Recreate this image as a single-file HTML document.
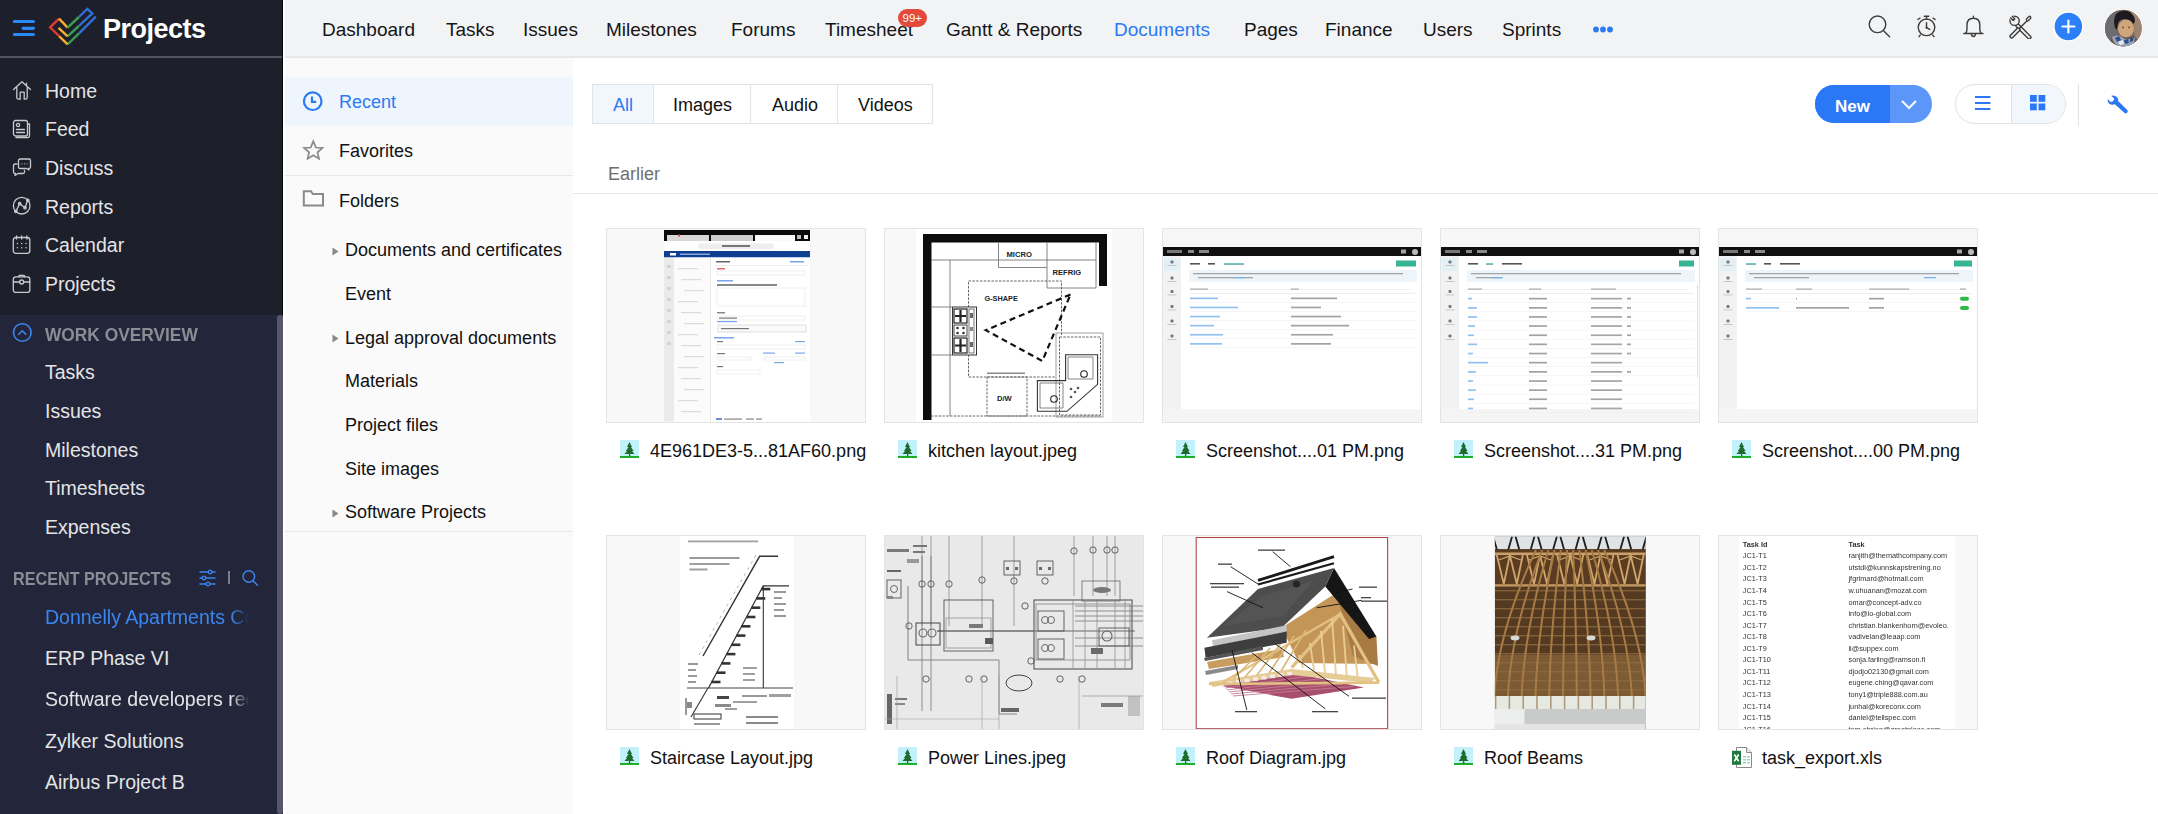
<!DOCTYPE html>
<html><head><meta charset="utf-8">
<style>
*{box-sizing:border-box;margin:0;padding:0}
html,body{width:2158px;height:814px;overflow:hidden;background:#fff;font-family:"Liberation Sans",sans-serif}
.a{position:absolute;white-space:nowrap}
#sb{position:absolute;left:0;top:0;width:283px;height:814px;background:#1d1f2b;overflow:hidden}
#sbe{position:absolute;left:282px;top:0;width:1px;height:315px;background:#06070b}
#sbl{position:absolute;left:0;top:315px;width:283px;height:499px;background:#23263a}
.clip{display:block;white-space:nowrap;width:204px;overflow:hidden;-webkit-mask-image:linear-gradient(to right,#000 186px,transparent 204px);mask-image:linear-gradient(to right,#000 186px,transparent 204px)}
.si{position:absolute;white-space:nowrap;left:45px;font-size:19.5px;color:#e4e4e6;line-height:1}
.sic{position:absolute;left:13px}
#tn{position:absolute;left:285px;top:0;width:1873px;height:58px;background:#f2f3f5;border-bottom:2px solid #e7e8ea}
.ni{position:absolute;top:20px;font-size:19px;color:#151515;line-height:1}
#fp{position:absolute;left:285px;top:58px;width:288px;height:756px;background:#fafafa}
#wst{position:absolute;left:283px;top:0;width:2px;height:814px;background:#fff}
.fi{position:absolute;font-size:18px;color:#111;line-height:1}
#mn{position:absolute;left:573px;top:58px;width:1585px;height:756px;background:#fff}
.card{position:absolute;width:260px;height:195px;border:1px solid #e4e4e4;background:#f8f8f8;overflow:hidden}
.cap{position:absolute;font-size:18px;color:#111;line-height:1}
</style></head><body>
<div id="sb">
  <div id="sbl"></div>
  <div class="a" style="left:0;top:56px;width:283px;height:2px;background:#4f5260"></div>
  <!-- hamburger -->
  <div class="a" style="left:13px;top:20px;width:21px;height:3px;border-radius:2px;background:#2f86f6"></div>
  <div class="a" style="left:22px;top:27px;width:12px;height:3px;border-radius:2px;background:#2f86f6"></div>
  <div class="a" style="left:13px;top:33px;width:21px;height:3px;border-radius:2px;background:#2f86f6"></div>
  <!-- logo -->
  <svg class="a" style="left:48px;top:6px" width="50" height="42" viewBox="0 0 50 42"></svg>
  <div class="a" style="left:103px;top:15.5px;font-size:27px;font-weight:700;color:#fff;line-height:1;letter-spacing:-0.5px">Projects</div>

  <div class="si" style="top:82px">Home</div>
  <div class="si" style="top:120px">Feed</div>
  <div class="si" style="top:159px">Discuss</div>
  <div class="si" style="top:198px">Reports</div>
  <div class="si" style="top:236px">Calendar</div>
  <div class="si" style="top:275px">Projects</div>

  <div class="a" style="left:44.5px;top:326.5px;font-size:17.5px;font-weight:700;color:#8b8d95;line-height:1;transform:scaleX(0.99);transform-origin:0 0">WORK OVERVIEW</div>
  <div class="si" style="top:363px">Tasks</div>
  <div class="si" style="top:402px">Issues</div>
  <div class="si" style="top:441px">Milestones</div>
  <div class="si" style="top:479px">Timesheets</div>
  <div class="si" style="top:518px">Expenses</div>

  <div class="a" style="left:13px;top:570.5px;font-size:17.5px;font-weight:700;color:#8b8d95;line-height:1;transform:scaleX(0.925);transform-origin:0 0">RECENT PROJECTS</div>
  <div class="si" style="top:608px;color:#3a86f0"><span class="clip">Donnelly Apartments Construction</span></div>
  <div class="si" style="top:649px">ERP Phase VI</div>
  <div class="si" style="top:690px"><span class="clip">Software developers recruitment</span></div>
  <div class="si" style="top:732px">Zylker Solutions</div>
  <div class="si" style="top:773px">Airbus Project B</div>
  <div class="si" style="top:814px">Bosch connected</div>
  <div class="a" style="left:277px;top:315px;width:6px;height:499px;border-radius:3px;background:#54566a"></div>
</div>

<div id="tn">
  <div class="ni" style="left:37px">Dashboard</div>
  <div class="ni" style="left:161px">Tasks</div>
  <div class="ni" style="left:238px">Issues</div>
  <div class="ni" style="left:321px">Milestones</div>
  <div class="ni" style="left:446px">Forums</div>
  <div class="ni" style="left:540px">Timesheet</div>
  <div class="ni" style="left:661px">Gantt &amp; Reports</div>
  <div class="ni" style="left:829px;color:#2a7af2">Documents</div>
  <div class="ni" style="left:959px">Pages</div>
  <div class="ni" style="left:1040px">Finance</div>
  <div class="ni" style="left:1138px">Users</div>
  <div class="ni" style="left:1217px">Sprints</div>
</div>

<div id="wst"></div><div id="sbe"></div>
<div id="fp">
  <div class="a" style="left:0;top:19px;width:288px;height:49px;background:#eef5fd"></div>
  <div class="a" style="left:0;top:117px;width:288px;height:1px;background:#e6e6e6"></div>
  <div class="a" style="left:0;top:473px;width:288px;height:1px;background:#e6e6e6"></div>
</div>
<div class="fi" style="left:339px;top:92.5px;color:#2a7af2">Recent</div>
<div class="fi" style="left:339px;top:142px">Favorites</div>
<div class="fi" style="left:339px;top:192px">Folders</div>
<div class="fi" style="left:345px;top:241px">Documents and certificates</div>
<div class="fi" style="left:345px;top:284.5px">Event</div>
<div class="fi" style="left:345px;top:328.5px">Legal approval documents</div>
<div class="fi" style="left:345px;top:372px">Materials</div>
<div class="fi" style="left:345px;top:416px">Project files</div>
<div class="fi" style="left:345px;top:460px">Site images</div>
<div class="fi" style="left:345px;top:503px">Software Projects</div>
<svg class="a" style="left:332px;top:247px" width="7" height="9"><path d="M0.5 0.5L6.5 4.5L0.5 8.5Z" fill="#888"/></svg>
<svg class="a" style="left:332px;top:334px" width="7" height="9"><path d="M0.5 0.5L6.5 4.5L0.5 8.5Z" fill="#888"/></svg>
<svg class="a" style="left:332px;top:509px" width="7" height="9"><path d="M0.5 0.5L6.5 4.5L0.5 8.5Z" fill="#888"/></svg>


<div id="mn">
  <div class="a" style="left:0;top:135px;width:1585px;height:1px;background:#e6e6e6"></div>
</div>
<!-- tabs -->
<div class="a" style="left:592px;top:84px;width:341px;height:40px;border:1px solid #e3e3e3;background:#fff"></div>
<div class="a" style="left:593px;top:85px;width:60px;height:38px;background:#f2f7fd"></div>
<div class="a" style="left:653px;top:85px;width:1px;height:38px;background:#e3e3e3"></div>
<div class="a" style="left:750px;top:85px;width:1px;height:38px;background:#e3e3e3"></div>
<div class="a" style="left:837px;top:85px;width:1px;height:38px;background:#e3e3e3"></div>
<div class="fi" style="left:613px;top:95.5px;color:#2a7af2">All</div>
<div class="fi" style="left:673px;top:95.5px">Images</div>
<div class="fi" style="left:772px;top:95.5px">Audio</div>
<div class="fi" style="left:858px;top:95.5px">Videos</div>
<div class="fi" style="left:608px;top:164.5px;color:#6e6e6e">Earlier</div>
<!-- new button -->
<div class="a" style="left:1815px;top:85px;width:117px;height:38px;border-radius:19px;background:#5b96f8;overflow:hidden"><div class="a" style="left:0;top:0;width:75px;height:38px;background:#2b78f7"></div></div>
<div class="a" style="left:1835px;top:97.5px;font-size:17px;color:#fff;line-height:1;font-weight:700">New</div>
<svg class="a" style="left:1900px;top:99px" width="18" height="12"><path d="M2 2L9 9L16 2" fill="none" stroke="#fff" stroke-width="2"/></svg>
<!-- view toggle -->
<div class="a" style="left:1955px;top:84px;width:111px;height:40px;border-radius:20px;border:1px solid #e2e2e2;background:#fff;overflow:hidden"><div class="a" style="left:55px;top:0;width:56px;height:40px;background:#f2f7fd;border-left:1px solid #e2e2e2"></div></div>
<div class="a" style="left:2078px;top:84px;width:1px;height:42px;background:#e2e2e2"></div>

<svg class="a" style="left:45px;top:4px" width="56" height="46" viewBox="0 0 56 46"><path d="M50.8 12.7 L34.0 29.4" fill="none" stroke="#2f6fd6" stroke-width="2.4" stroke-linejoin="miter" stroke-linecap="butt"/><path d="M34.0 29.4 L22.6 40.4" fill="none" stroke="#3b9b52" stroke-width="2.4" stroke-linejoin="miter" stroke-linecap="butt"/><path d="M22.6 40.4 L14.1 32.2" fill="none" stroke="#f4b131" stroke-width="2.4" stroke-linejoin="miter" stroke-linecap="butt"/><path d="M14.1 32.2 L5.1 23.3 L14.1 14.7" fill="none" stroke="#e2392f" stroke-width="2.4" stroke-linejoin="miter" stroke-linecap="butt"/><path d="M14.1 14.7 L22.6 23.6" fill="none" stroke="#f4b131" stroke-width="2.4" stroke-linejoin="miter" stroke-linecap="butt"/><path d="M22.6 23.6 L33.9 13.0" fill="none" stroke="#3b9b52" stroke-width="2.4" stroke-linejoin="miter" stroke-linecap="butt"/><path d="M33.9 13.0 L42.4 4.8 L47.3 9.4 L33.9 22.0" fill="none" stroke="#2f6fd6" stroke-width="2.4" stroke-linejoin="miter" stroke-linecap="butt"/><path d="M33.9 22.0 L22.6 32.4" fill="none" stroke="#3b9b52" stroke-width="2.4" stroke-linejoin="miter" stroke-linecap="butt"/><path d="M22.6 32.4 L13.6 23.8" fill="none" stroke="#f4b131" stroke-width="2.4" stroke-linejoin="miter" stroke-linecap="butt"/></svg>
<svg class="a" style="left:12px;top:80px" width="20" height="21" viewBox="0 0 20 21"><path d="M1.5 9.5L10 1.8L18.5 9.5M4.8 7V17.5Q4.8 19.2 6.5 19.2H8.2V12.2H12.2V19.2H13.5Q15.2 19.2 15.2 17.5V7M14.5 3.2V5.5" fill="none" stroke="#c9cace" stroke-width="1.3" stroke-linecap="round" stroke-linejoin="round"/></svg>
<svg class="a" style="left:12px;top:119px" width="20" height="20" viewBox="0 0 20 20"><rect x="1.5" y="1.5" width="14" height="15.5" rx="2" fill="none" stroke="#c9cace" stroke-width="1.3" stroke-linecap="round" stroke-linejoin="round"/><path d="M15.5 5H17.5V17Q17.5 18.5 16 18.5H4" fill="none" stroke="#c9cace" stroke-width="1.3" stroke-linecap="round" stroke-linejoin="round"/><circle cx="6" cy="6" r="1.6" fill="none" stroke="#c9cace" stroke-width="1.3" stroke-linecap="round" stroke-linejoin="round"/><path d="M4.5 10.5H12.5M4.5 13.5H12.5" fill="none" stroke="#c9cace" stroke-width="1.3" stroke-linecap="round" stroke-linejoin="round"/></svg>
<svg class="a" style="left:12px;top:157px" width="20" height="20" viewBox="0 0 20 20"><path d="M6.5 3.5Q6.5 2 8 2H17Q18.5 2 18.5 3.5V10Q18.5 11.5 17 11.5H16.5L17 13L14.5 11.5H8Q6.5 11.5 6.5 10Z" fill="none" stroke="#c9cace" stroke-width="1.3" stroke-linecap="round" stroke-linejoin="round"/><path d="M5 7H3Q1.5 7 1.5 8.5V15Q1.5 16.5 3 16.5H3.5L3 18.5L6 16.5H11Q12.5 16.5 12.5 15V13.5" fill="none" stroke="#c9cace" stroke-width="1.3" stroke-linecap="round" stroke-linejoin="round"/><circle cx="10" cy="6.8" r="0.6" fill="#c9cace"/><circle cx="12.5" cy="6.8" r="0.6" fill="#c9cace"/><circle cx="15" cy="6.8" r="0.6" fill="#c9cace"/></svg>
<svg class="a" style="left:12px;top:196px" width="20" height="20" viewBox="0 0 20 20"><circle cx="9.7" cy="9.7" r="8.3" fill="none" stroke="#c9cace" stroke-width="1.3" stroke-linecap="round" stroke-linejoin="round"/><path d="M3.8 15.6L7.7 7.7L13 11.7L15.6 4.5" fill="none" stroke="#c9cace" stroke-width="1.3" stroke-linecap="round" stroke-linejoin="round"/><circle cx="3.8" cy="15.3" r="1.2" fill="none" stroke="#c9cace" stroke-width="1.3" stroke-linecap="round" stroke-linejoin="round"/><circle cx="7.7" cy="7.7" r="1.2" fill="none" stroke="#c9cace" stroke-width="1.3" stroke-linecap="round" stroke-linejoin="round"/><circle cx="13" cy="11.7" r="1.2" fill="none" stroke="#c9cace" stroke-width="1.3" stroke-linecap="round" stroke-linejoin="round"/><circle cx="15.8" cy="4.3" r="1.2" fill="none" stroke="#c9cace" stroke-width="1.3" stroke-linecap="round" stroke-linejoin="round"/></svg>
<svg class="a" style="left:12px;top:235px" width="20" height="20" viewBox="0 0 20 20"><rect x="1.3" y="2.5" width="16.5" height="15.8" rx="2.5" fill="none" stroke="#c9cace" stroke-width="1.3" stroke-linecap="round" stroke-linejoin="round"/><path d="M4.5 1V4M9.7 1V4M14.9 1V4" fill="none" stroke="#c9cace" stroke-width="1.3" stroke-linecap="round" stroke-linejoin="round"/><circle cx="5.4" cy="8.5" r="0.75" fill="#c9cace"/><circle cx="5.4" cy="12.8" r="0.75" fill="#c9cace"/><circle cx="9.7" cy="8.5" r="0.75" fill="#c9cace"/><circle cx="9.7" cy="12.8" r="0.75" fill="#c9cace"/><circle cx="14.0" cy="8.5" r="0.75" fill="#c9cace"/><circle cx="14.0" cy="12.8" r="0.75" fill="#c9cace"/></svg>
<svg class="a" style="left:12px;top:274px" width="20" height="20" viewBox="0 0 20 20"><rect x="1.3" y="2.8" width="16.5" height="15.6" rx="2.5" fill="none" stroke="#c9cace" stroke-width="1.3" stroke-linecap="round" stroke-linejoin="round"/><path d="M7 2.8V1.3H12.3V2.8M1.3 8H7.6M11.8 8H17.8" fill="none" stroke="#c9cace" stroke-width="1.3" stroke-linecap="round" stroke-linejoin="round"/><circle cx="9.7" cy="8" r="2" fill="none" stroke="#c9cace" stroke-width="1.3" stroke-linecap="round" stroke-linejoin="round"/></svg>
<svg class="a" style="left:12px;top:322px" width="21" height="21" viewBox="0 0 21 21"><circle cx="10.3" cy="10.5" r="8.8" fill="none" stroke="#3b86ee" stroke-width="1.6"/><path d="M6.8 12.3L10.3 8.8L13.8 12.3" fill="none" stroke="#3b86ee" stroke-width="1.6" stroke-linecap="round" stroke-linejoin="round"/></svg>
<svg class="a" style="left:198px;top:569px" width="19" height="18" viewBox="0 0 19 18"><path d="M2 3H17M2 9H17M2 15H17" fill="none" stroke="#3b86ee" stroke-width="1.4" stroke-linecap="round"/><circle cx="12" cy="3" r="1.8" fill="#23263a" stroke="#3b86ee" stroke-width="1.3"/><circle cx="6" cy="9" r="1.8" fill="#23263a" stroke="#3b86ee" stroke-width="1.3"/><circle cx="10" cy="15" r="1.8" fill="#23263a" stroke="#3b86ee" stroke-width="1.3"/></svg>
<div class="a" style="left:228px;top:571px;width:1.5px;height:13px;background:#7b7d88"></div>
<svg class="a" style="left:241px;top:569px" width="19" height="18" viewBox="0 0 19 18"><circle cx="7.8" cy="7.5" r="5.8" fill="none" stroke="#3b86ee" stroke-width="1.4" stroke-linecap="round"/><path d="M12 11.8L16.5 16.3" fill="none" stroke="#3b86ee" stroke-width="1.4" stroke-linecap="round"/></svg>
<svg class="a" style="left:1866px;top:14px" width="26" height="25" viewBox="0 0 26 25"><circle cx="11.5" cy="10.3" r="8.3" fill="none" stroke="#3d3d3d" stroke-width="1.4" stroke-linecap="round" stroke-linejoin="round"/><path d="M17.8 16.9L23.6 22.8" fill="none" stroke="#3d3d3d" stroke-width="1.4" stroke-linecap="round" stroke-linejoin="round"/></svg>
<svg class="a" style="left:1914px;top:14px" width="26" height="25" viewBox="0 0 26 25"><circle cx="12.5" cy="13.3" r="8.3" fill="none" stroke="#3d3d3d" stroke-width="1.4" stroke-linecap="round" stroke-linejoin="round"/><path d="M10.2 2.3H14.8M12.5 2.3V4.6M3.8 5.5L6 4.2M21.2 5.5L19 4.2M5 22.6L6.3 21M20 22.6L18.7 21M12.5 8.6V13.6L15.8 15.4" fill="none" stroke="#3d3d3d" stroke-width="1.4" stroke-linecap="round" stroke-linejoin="round"/><circle cx="12.5" cy="13.6" r="1.1" fill="#3d3d3d"/></svg>
<svg class="a" style="left:1961px;top:14px" width="26" height="25" viewBox="0 0 26 25"><path d="M4.5 19.5Q6 18 6 15V11Q6 4.3 12.4 4.3Q18.8 4.3 18.8 11V15Q18.8 18 20.3 19.5H2.8H22M12.4 2.3V4.3M10.4 19.8Q10.4 22.5 12.4 22.5Q14.4 22.5 14.4 19.8" fill="none" stroke="#3d3d3d" stroke-width="1.4" stroke-linecap="round" stroke-linejoin="round"/></svg>
<svg class="a" style="left:2008px;top:14px" width="26" height="25" viewBox="0 0 26 25"><path d="M9.5 11.5L21.3 23.3" stroke="#3d3d3d" stroke-width="4.6" stroke-linecap="round"/><path d="M9.5 11.5L21.3 23.3" stroke="#f2f3f5" stroke-width="1.8" stroke-linecap="round"/><circle cx="6.6" cy="6.8" r="4.6" fill="#f2f3f5" stroke="#3d3d3d" stroke-width="1.4"/><path d="M1.2 4.2L4.5 1.2L8 4.8L5 8Z" fill="#f2f3f5"/><path d="M2.3 3.6L5.2 6.5L6.8 4.9L4 2" fill="none" stroke="#3d3d3d" stroke-width="1.4" stroke-linejoin="round"/><path d="M3.6 22.3L10.3 15.6" stroke="#3d3d3d" stroke-width="4.6" stroke-linecap="round"/><path d="M3.6 22.3L10.3 15.6" stroke="#f2f3f5" stroke-width="1.8" stroke-linecap="round"/><path d="M10.8 15.1L19.6 6.3" stroke="#3d3d3d" stroke-width="1.4"/><path d="M19.6 5.6L21.6 3.6" stroke="#3d3d3d" stroke-width="3.8" stroke-linecap="round"/><path d="M19.6 5.6L21.6 3.6" stroke="#f2f3f5" stroke-width="1.2" stroke-linecap="round"/></svg>
<svg class="a" style="left:2052px;top:10px" width="33" height="33" viewBox="0 0 33 33"><circle cx="16.4" cy="16.5" r="14.5" fill="#2c7ff8" stroke="#fff" stroke-width="1.5"/><path d="M16.4 10.5V22.5M10.4 16.5H22.4" stroke="#fff" stroke-width="2.2" stroke-linecap="round"/></svg>
<svg class="a" style="left:2103px;top:9px" width="40" height="40" viewBox="0 0 40 40"><defs><clipPath id="av"><circle cx="20.3" cy="19.1" r="18.4"/></clipPath></defs><circle cx="20.3" cy="19.1" r="19.4" fill="#fff"/><g clip-path="url(#av)"><rect width="40" height="40" fill="#7a6a60"/><rect x="0" y="0" width="15" height="40" fill="#6c6c6e"/><path d="M24 0H40V30L33 32Q30 20 31 8Z" fill="#9c8470"/><path d="M11 13Q11 2 21 1.5Q31 2 32 12Q31 16 29 14Q27 9 22 10Q16 10 15 15Q14 20 13.5 21Q11 18 11 13Z" fill="#1d1a1f"/><ellipse cx="23" cy="19.5" rx="8" ry="9" fill="#cfa57a"/><path d="M15 12Q20 8 29 12Q27 9 22 9Q17 9 15 12Z" fill="#1d1a1f"/><circle cx="20" cy="18.5" r="0.9" fill="#7a4a50"/><circle cx="26" cy="18.5" r="0.9" fill="#7a4a50"/><path d="M6 40Q7 27 14 25Q22 31 31 27Q36 30 37 40Z" fill="#6a5548"/><path d="M9 28Q15 24 20 29Q26 32 32 28L31 35Q24 40 15 37Q10 34 9 28Z" fill="#9aa4b4"/><path d="M12 29L16 27L18 31L14 33ZM21 31L25 30L26 34L22 35ZM27 29L31 28L30 32L27 33Z" fill="#2d4f8e"/><path d="M15 33L20 31L21 35L17 36Z" fill="#e8eaee"/></g></svg>
<div class="a" style="left:898px;top:9px;width:28.5px;height:18px;border-radius:9px;background:#e34a3b;color:#fff;font-size:11.5px;line-height:18px;text-align:center">99+</div>
<svg class="a" style="left:1591px;top:24px" width="24" height="10" viewBox="0 0 24 10"><circle cx="5.0" cy="5.5" r="2.9" fill="#2a7af2"/><circle cx="12.0" cy="5.5" r="2.9" fill="#2a7af2"/><circle cx="19.0" cy="5.5" r="2.9" fill="#2a7af2"/></svg>
<svg class="a" style="left:12px;top:19px" width="24" height="18" viewBox="0 0 24 18"><path d="M2.2 2.6H21.8M10.8 9.1H21.8M2.2 15.5H21.8" stroke="#2b8af7" stroke-width="2.6" stroke-linecap="round"/></svg>
<svg class="a" style="left:301px;top:90px" width="24" height="24" viewBox="0 0 24 24"><circle cx="11.7" cy="11.2" r="8.8" fill="none" stroke="#2a7af2" stroke-width="2.2"/><path d="M11 6.5V11.8H15.2" fill="none" stroke="#2a7af2" stroke-width="2.2"/></svg>
<svg class="a" style="left:301px;top:139px" width="24" height="23" viewBox="0 0 24 23"><path d="M12.3 2.3L14.9 8.5L21.5 9L16.5 13.3L18 19.8L12.3 16.3L6.6 19.8L8.1 13.3L3.1 9L9.7 8.5Z" fill="none" stroke="#8a8a8a" stroke-width="1.7" stroke-linejoin="miter"/></svg>
<svg class="a" style="left:301px;top:189px" width="24" height="20" viewBox="0 0 24 20"><path d="M2.8 2.3H10L11.8 5H22V16.5H2.8Z" fill="none" stroke="#8a8a8a" stroke-width="2"/></svg>
<svg class="a" style="left:1973px;top:94px" width="20" height="18" viewBox="0 0 20 18"><path d="M2 3H17.4M2 9H17.4M2 15H17.4" stroke="#2a78f5" stroke-width="1.9"/></svg>
<svg class="a" style="left:2029px;top:94px" width="18" height="18" viewBox="0 0 18 18"><rect x="1.0" y="1.0" width="6.8" height="6.8" fill="#2a78f5"/><rect x="1.0" y="9.5" width="6.8" height="6.8" fill="#2a78f5"/><rect x="9.5" y="1.0" width="6.8" height="6.8" fill="#2a78f5"/><rect x="9.5" y="9.5" width="6.8" height="6.8" fill="#2a78f5"/></svg>
<svg class="a" style="left:2106px;top:93px" width="23" height="22" viewBox="0 0 23 22"><path d="M9.5 3.8Q7 1.2 3.8 2.3L6.8 5.3L5.6 7.8L3 8.4L0.3 5.5Q-0.2 9.6 3.4 11Q5.5 11.6 7.4 10.8L16.8 19.2Q18.6 20.6 19.9 19.1Q21 17.6 19.5 16.3L10.6 7.6Q11.2 5.5 9.5 3.8Z" fill="#2a78f5" transform="translate(1.5 0.5)"/></svg>

<div class="card" style="left:606px;top:228px"><svg class="a" style="left:0;top:0;filter:blur(0.60px)" width="258" height="193" viewBox="0 0 258 193"><rect x="57.0" y="1.0" width="146.0" height="192.0" fill="#fff" /><rect x="57.0" y="1.0" width="146.0" height="11.0" fill="#0a0a0a" /><rect x="60.0" y="6.0" width="42.0" height="6.0" fill="#d8d8d8" /><rect x="104.0" y="6.0" width="42.0" height="6.0" fill="#cfcfcf" /><rect x="148.0" y="6.0" width="40.0" height="6.0" fill="#fafafa" /><rect x="190.0" y="6.0" width="4.0" height="4.0" fill="#bbb" /><rect x="197.0" y="6.0" width="4.0" height="4.0" fill="#eee" /><rect x="71.0" y="5.5" width="2.0" height="2.0" fill="#e44" /><rect x="57.0" y="12.0" width="146.0" height="10.0" fill="#fff" /><rect x="91.0" y="14.5" width="76.0" height="5.5" fill="#eeeeee" rx="2.7"/><rect x="115.0" y="16.0" width="28.0" height="2.0" fill="#777" /><rect x="57.0" y="22.0" width="146.0" height="6.5" fill="#0e3f92" /><rect x="63.0" y="24.0" width="6.0" height="2.5" fill="#fff" /><rect x="73.0" y="24.5" width="30.0" height="1.5" fill="#8aa8dd" /><rect x="57.0" y="28.5" width="10.0" height="164.0" fill="#ebebeb" /><rect x="67.0" y="28.5" width="36.0" height="164.0" fill="#fbfbfb" /><rect x="103.0" y="28.5" width="100.0" height="164.0" fill="#fff" /><rect x="103.0" y="28.5" width="1.0" height="164.0" fill="#e6e6e6" /><rect x="109.0" y="32.0" width="14.0" height="1.5" fill="#666" /><rect x="183.0" y="32.0" width="14.0" height="1.5" fill="#7aa6e6" /><rect x="107.0" y="36.0" width="94.0" height="1.0" fill="#eee" /><rect x="110.0" y="39.0" width="8.0" height="1.5" fill="#e66" /><rect x="110.0" y="42.0" width="88.0" height="4.0" fill="#fff" stroke="#e4e4e4" stroke-width="0.6"/><rect x="110.0" y="51.0" width="16.0" height="1.5" fill="#7aa6e6" /><rect x="110.0" y="55.0" width="60.0" height="2.0" fill="#888" /><rect x="110.0" y="59.0" width="88.0" height="18.0" fill="#fff" stroke="#e4e4e4" stroke-width="0.6"/><rect x="110.0" y="83.0" width="8.0" height="1.5" fill="#888" /><rect x="110.0" y="87.0" width="88.0" height="4.0" fill="#fff" stroke="#e4e4e4" stroke-width="0.6"/><rect x="112.0" y="88.5" width="18.0" height="1.2" fill="#777" /><rect x="110.0" y="92.0" width="20.0" height="1.2" fill="#7aa6e6" /><rect x="111.0" y="96.0" width="88.0" height="7.0" fill="#fafafa" stroke="#ccc" stroke-width="0.6"/><rect x="114.0" y="99.0" width="28.0" height="1.2" fill="#777" /><rect x="107.0" y="108.0" width="20.0" height="1.5" fill="#7aa6e6" /><rect x="110.0" y="112.0" width="6.0" height="1.2" fill="#777" /><rect x="188.0" y="112.0" width="10.0" height="1.2" fill="#7aa6e6" /><rect x="110.0" y="116.0" width="88.0" height="4.0" fill="#fff" stroke="#e4e4e4" stroke-width="0.6"/><rect x="110.0" y="124.0" width="8.0" height="1.2" fill="#777" /><rect x="156.0" y="123.5" width="12.0" height="1.2" fill="#7aa6e6" /><rect x="188.0" y="123.5" width="10.0" height="1.2" fill="#7aa6e6" /><rect x="110.0" y="128.0" width="34.0" height="3.0" fill="#fff" stroke="#e4e4e4" stroke-width="0.6"/><rect x="157.0" y="128.0" width="41.0" height="3.0" fill="#fff" stroke="#e4e4e4" stroke-width="0.6"/><rect x="167.0" y="133.0" width="10.0" height="1.2" fill="#7aa6e6" /><rect x="110.0" y="137.0" width="6.0" height="1.2" fill="#777" /><rect x="110.0" y="141.0" width="43.0" height="4.0" fill="#fff" stroke="#e4e4e4" stroke-width="0.6"/><rect x="109.0" y="189.0" width="6.0" height="2.0" fill="#6d8fd0" /><rect x="117.0" y="189.5" width="18.0" height="1.2" fill="#888" /><rect x="139.0" y="189.5" width="8.0" height="1.2" fill="#888" /><rect x="149.0" y="189.5" width="6.0" height="1.2" fill="#888" /><rect x="71.0" y="39.0" width="20.0" height="1.2" fill="#dcdcdc" /><rect x="74.0" y="50.0" width="20.0" height="1.2" fill="#dcdcdc" /><rect x="77.0" y="61.0" width="20.0" height="1.2" fill="#dcdcdc" /><rect x="71.0" y="72.0" width="20.0" height="1.2" fill="#dcdcdc" /><rect x="74.0" y="83.0" width="20.0" height="1.2" fill="#dcdcdc" /><rect x="77.0" y="94.0" width="20.0" height="1.2" fill="#dcdcdc" /><rect x="71.0" y="105.0" width="20.0" height="1.2" fill="#dcdcdc" /><rect x="74.0" y="116.0" width="20.0" height="1.2" fill="#dcdcdc" /><rect x="77.0" y="127.0" width="20.0" height="1.2" fill="#dcdcdc" /><rect x="71.0" y="138.0" width="20.0" height="1.2" fill="#dcdcdc" /><rect x="74.0" y="149.0" width="20.0" height="1.2" fill="#dcdcdc" /><rect x="77.0" y="160.0" width="20.0" height="1.2" fill="#dcdcdc" /><rect x="71.0" y="171.0" width="20.0" height="1.2" fill="#dcdcdc" /><rect x="74.0" y="182.0" width="20.0" height="1.2" fill="#dcdcdc" /><rect x="60.0" y="36.0" width="4.0" height="3.0" fill="#d4d4d4" /><rect x="60.0" y="47.0" width="4.0" height="3.0" fill="#d4d4d4" /><rect x="60.0" y="58.0" width="4.0" height="3.0" fill="#d4d4d4" /><rect x="60.0" y="69.0" width="4.0" height="3.0" fill="#d4d4d4" /><rect x="60.0" y="80.0" width="4.0" height="3.0" fill="#d4d4d4" /><rect x="60.0" y="91.0" width="4.0" height="3.0" fill="#d4d4d4" /><rect x="60.0" y="102.0" width="4.0" height="3.0" fill="#d4d4d4" /><rect x="60.0" y="113.0" width="4.0" height="3.0" fill="#d4d4d4" /></svg></div>
<svg class="a" style="left:620px;top:440px" width="19" height="18" viewBox="0 0 19 18"><rect width="19" height="18" fill="#c2f1fb"/><path d="M0 18Q9.5 13.5 19 18Z" fill="#1fae2a"/><rect x="0" y="16" width="19" height="2" fill="#1fae2a"/><path d="M9.5 2L12 7H11L13.5 11H12L14.5 14H4.5L7 11H6L8.5 7H7Z" fill="#1d6b2d"/><rect x="9" y="13" width="1.2" height="3.5" fill="#1d6b2d"/></svg>
<div class="cap" style="left:650px;top:441.5px">4E961DE3-5...81AF60.png</div>
<div class="card" style="left:884px;top:228px"><svg class="a" style="left:0;top:0" width="258" height="193" viewBox="0 0 258 193"><rect x="31.0" y="0.0" width="196.0" height="193.0" fill="#fff" /><rect x="38.0" y="5.0" width="8.5" height="186.0" fill="#0d0d0d" /><rect x="38.0" y="5.0" width="184.0" height="8.5" fill="#0d0d0d" /><rect x="214.0" y="5.0" width="8.0" height="52.0" fill="#0d0d0d" /><path d="M46 31H162M65 31V187M46 78H67M46 126H67" stroke="#777" stroke-width="0.9" fill="none"/><path d="M113.5 13.5V38.5H162M162 13.5V59H211V13.5M162 31H211" stroke="#777" stroke-width="0.9" fill="none"/><path d="M176.5 106V52H83.5V148H171" stroke="#666" stroke-width="1" fill="none" stroke-dasharray="2.5 1.3"/><rect x="174.5" y="108" width="41" height="78" stroke="#666" stroke-width="1" fill="none" stroke-dasharray="2.5 1.3"/><rect x="102" y="148" width="40" height="39" stroke="#666" stroke-width="1" fill="none" stroke-dasharray="2.5 1.3"/><path d="M46 187H217" stroke="#666" stroke-width="1" fill="none" stroke-dasharray="2.5 1.3"/><rect x="171" y="104" width="47" height="84" stroke="#888" stroke-width="0.8" fill="none"/><rect x="102.0" y="143.5" width="38.0" height="1.5" fill="#888" /><rect x="67.5" y="78.0" width="24.0" height="48.0" fill="#fff" stroke="#333" stroke-width="1"/><rect x="69.0" y="80.0" width="13.0" height="14.0" fill="#fff" stroke="#222" stroke-width="1.2"/><rect x="69.0" y="109.0" width="13.0" height="15.0" fill="#fff" stroke="#222" stroke-width="1.2"/><rect x="69.0" y="96.0" width="13.0" height="11.0" fill="#fff" stroke="#444" stroke-width="1"/><path d="M75.5 81V93M70 87H81M75.5 110V123M70 116.5H81" stroke="#222" stroke-width="2.2"/><circle cx="72.5" cy="99" r="1.3" fill="#333"/><circle cx="78.5" cy="99" r="1.3" fill="#333"/><circle cx="72.5" cy="104" r="1.3" fill="#333"/><circle cx="78.5" cy="104" r="1.3" fill="#333"/><rect x="84.0" y="80.0" width="5.0" height="44.0" fill="#fff" stroke="#555" stroke-width="0.8"/><rect x="85.0" y="84.0" width="3.0" height="5.0" fill="#666" /><rect x="85.0" y="113.0" width="3.0" height="5.0" fill="#666" /><rect x="85.0" y="98.0" width="3.0" height="4.0" fill="#888" /><path d="M185.5 65.5L100.8 101.2L157.3 132Z" fill="none" stroke="#111" stroke-width="2.2" stroke-dasharray="6 4"/><path d="M180.6 125.8H212.6V155.3L181.9 182.3H152.4V151.6H180.6Z" stroke="#333" stroke-width="1.1" fill="none"/><path d="M183 128H208V150H183ZM155 154H178V179H155Z" stroke="#666" stroke-width="0.8" fill="none"/><circle cx="199" cy="145" r="3.3" stroke="#222" stroke-width="1.1" fill="none"/><circle cx="169" cy="170" r="3.3" stroke="#222" stroke-width="1.1" fill="none"/><circle cx="186" cy="160" r="1.3" fill="#555"/><circle cx="190" cy="163" r="1.3" fill="#555"/><circle cx="186" cy="168" r="1.3" fill="#555"/><circle cx="193" cy="159" r="1.3" fill="#555"/><text x="121.5" y="27.8" font-size="7.6" font-family="Liberation Sans" font-weight="700" fill="#222">MICRO</text><text x="167.5" y="46" font-size="7.6" font-family="Liberation Sans" font-weight="700" fill="#222">REFRIG</text><text x="99.5" y="72" font-size="7.3" font-family="Liberation Sans" font-weight="700" fill="#222">G-SHAPE</text><text x="112" y="171.5" font-size="7.6" font-family="Liberation Sans" font-weight="700" fill="#222">D/W</text></svg></div>
<svg class="a" style="left:898px;top:440px" width="19" height="18" viewBox="0 0 19 18"><rect width="19" height="18" fill="#c2f1fb"/><path d="M0 18Q9.5 13.5 19 18Z" fill="#1fae2a"/><rect x="0" y="16" width="19" height="2" fill="#1fae2a"/><path d="M9.5 2L12 7H11L13.5 11H12L14.5 14H4.5L7 11H6L8.5 7H7Z" fill="#1d6b2d"/><rect x="9" y="13" width="1.2" height="3.5" fill="#1d6b2d"/></svg>
<div class="cap" style="left:928px;top:441.5px">kitchen layout.jpeg</div>
<div class="card" style="left:1162px;top:228px"><svg class="a" style="left:0;top:0;filter:blur(0.60px)" width="258" height="193" viewBox="0 0 258 193"><rect x="0.0" y="0.0" width="258.0" height="193.0" fill="#f7f7f7" /><rect x="0.0" y="18.0" width="258.0" height="9.0" fill="#101010" /><rect x="4.0" y="21.0" width="15.0" height="3.0" fill="#777" /><rect x="25.0" y="21.0" width="6.0" height="3.0" fill="#888" /><rect x="36.0" y="21.0" width="10.0" height="3.0" fill="#888" /><rect x="238.0" y="20.5" width="5.0" height="4.0" fill="#a5a5a5" /><rect x="249.0" y="20.0" width="6.0" height="6.0" fill="#bbb" rx="3"/><rect x="0.0" y="27.0" width="18.0" height="153.0" fill="#f2f2f2" /><rect x="1.0" y="29.0" width="16.0" height="13.0" fill="#e3f1f7" /><rect x="7.5" y="31.5" width="3.0" height="3.0" fill="#777" rx="1"/><rect x="4.5" y="36.0" width="9.0" height="0.8" fill="#bbb" /><rect x="7.5" y="47.5" width="3.0" height="3.0" fill="#777" rx="1"/><rect x="4.5" y="52.0" width="9.0" height="0.8" fill="#bbb" /><rect x="7.5" y="61.0" width="3.0" height="3.0" fill="#777" rx="1"/><rect x="4.5" y="65.5" width="9.0" height="0.8" fill="#bbb" /><rect x="7.5" y="76.0" width="3.0" height="3.0" fill="#777" rx="1"/><rect x="4.5" y="80.5" width="9.0" height="0.8" fill="#bbb" /><rect x="7.5" y="90.5" width="3.0" height="3.0" fill="#777" rx="1"/><rect x="4.5" y="95.0" width="9.0" height="0.8" fill="#bbb" /><rect x="7.5" y="105.5" width="3.0" height="3.0" fill="#777" rx="1"/><rect x="4.5" y="110.0" width="9.0" height="0.8" fill="#bbb" /><rect x="18.0" y="27.0" width="240.0" height="153.0" fill="#fff" /><rect x="0.0" y="180.0" width="258.0" height="13.0" fill="#f5f5f5" /><rect x="26.0" y="41.0" width="228.0" height="12.0" fill="#edf5fa" /><rect x="30.0" y="44.0" width="210.0" height="1.3" fill="#a5a5a5" /><rect x="35.0" y="48.0" width="55.0" height="1.3" fill="#a5a5a5" /><rect x="70.0" y="48.0" width="12.0" height="1.3" fill="#7db0e8" /><rect x="233.0" y="31.5" width="20.0" height="6.0" fill="#36b596" /><rect x="27.0" y="34.0" width="10.0" height="1.6" fill="#555" /><rect x="45.0" y="34.0" width="7.0" height="1.6" fill="#555" /><rect x="61.0" y="34.0" width="20.0" height="1.6" fill="#555" /><rect x="61.0" y="34.0" width="20.0" height="1.6" fill="#72c8c0" /><rect x="27.0" y="60.0" width="220.0" height="1.0" fill="#f0f0f0" /><rect x="27.0" y="64.0" width="226.0" height="0.8" fill="#eaeaea" /><rect x="27.0" y="59.5" width="18.0" height="1.2" fill="#aaa" /><rect x="128.0" y="59.5" width="8.0" height="1.2" fill="#aaa" /><rect x="27.0" y="68.5" width="28.0" height="1.7" fill="#92c0f2" /><rect x="128.0" y="68.5" width="46.0" height="1.7" fill="#a2a2a2" /><rect x="27.0" y="73.0" width="226.0" height="0.6" fill="#efefef" /><rect x="27.0" y="77.6" width="48.0" height="1.7" fill="#92c0f2" /><rect x="128.0" y="77.6" width="30.0" height="1.7" fill="#a2a2a2" /><rect x="27.0" y="82.1" width="226.0" height="0.6" fill="#efefef" /><rect x="27.0" y="86.7" width="30.0" height="1.7" fill="#92c0f2" /><rect x="128.0" y="86.7" width="50.0" height="1.7" fill="#a2a2a2" /><rect x="27.0" y="91.2" width="226.0" height="0.6" fill="#efefef" /><rect x="27.0" y="95.8" width="24.0" height="1.7" fill="#92c0f2" /><rect x="128.0" y="95.8" width="58.0" height="1.7" fill="#a2a2a2" /><rect x="27.0" y="100.3" width="226.0" height="0.6" fill="#efefef" /><rect x="27.0" y="104.9" width="33.0" height="1.7" fill="#92c0f2" /><rect x="128.0" y="104.9" width="42.0" height="1.7" fill="#a2a2a2" /><rect x="27.0" y="109.4" width="226.0" height="0.6" fill="#efefef" /><rect x="27.0" y="114.0" width="32.0" height="1.7" fill="#92c0f2" /><rect x="128.0" y="114.0" width="40.0" height="1.7" fill="#a2a2a2" /><rect x="27.0" y="118.5" width="226.0" height="0.6" fill="#efefef" /></svg></div>
<svg class="a" style="left:1176px;top:440px" width="19" height="18" viewBox="0 0 19 18"><rect width="19" height="18" fill="#c2f1fb"/><path d="M0 18Q9.5 13.5 19 18Z" fill="#1fae2a"/><rect x="0" y="16" width="19" height="2" fill="#1fae2a"/><path d="M9.5 2L12 7H11L13.5 11H12L14.5 14H4.5L7 11H6L8.5 7H7Z" fill="#1d6b2d"/><rect x="9" y="13" width="1.2" height="3.5" fill="#1d6b2d"/></svg>
<div class="cap" style="left:1206px;top:441.5px">Screenshot....01 PM.png</div>
<div class="card" style="left:1440px;top:228px"><svg class="a" style="left:0;top:0;filter:blur(0.60px)" width="258" height="193" viewBox="0 0 258 193"><rect x="0.0" y="0.0" width="258.0" height="193.0" fill="#f7f7f7" /><rect x="0.0" y="18.0" width="258.0" height="9.0" fill="#101010" /><rect x="4.0" y="21.0" width="15.0" height="3.0" fill="#777" /><rect x="25.0" y="21.0" width="6.0" height="3.0" fill="#888" /><rect x="36.0" y="21.0" width="10.0" height="3.0" fill="#888" /><rect x="238.0" y="20.5" width="5.0" height="4.0" fill="#a5a5a5" /><rect x="249.0" y="20.0" width="6.0" height="6.0" fill="#bbb" rx="3"/><rect x="0.0" y="27.0" width="18.0" height="153.0" fill="#f2f2f2" /><rect x="1.0" y="29.0" width="16.0" height="13.0" fill="#e3f1f7" /><rect x="7.5" y="31.5" width="3.0" height="3.0" fill="#777" rx="1"/><rect x="4.5" y="36.0" width="9.0" height="0.8" fill="#bbb" /><rect x="7.5" y="47.5" width="3.0" height="3.0" fill="#777" rx="1"/><rect x="4.5" y="52.0" width="9.0" height="0.8" fill="#bbb" /><rect x="7.5" y="61.0" width="3.0" height="3.0" fill="#777" rx="1"/><rect x="4.5" y="65.5" width="9.0" height="0.8" fill="#bbb" /><rect x="7.5" y="76.0" width="3.0" height="3.0" fill="#777" rx="1"/><rect x="4.5" y="80.5" width="9.0" height="0.8" fill="#bbb" /><rect x="7.5" y="90.5" width="3.0" height="3.0" fill="#777" rx="1"/><rect x="4.5" y="95.0" width="9.0" height="0.8" fill="#bbb" /><rect x="7.5" y="105.5" width="3.0" height="3.0" fill="#777" rx="1"/><rect x="4.5" y="110.0" width="9.0" height="0.8" fill="#bbb" /><rect x="18.0" y="27.0" width="240.0" height="153.0" fill="#fff" /><rect x="0.0" y="180.0" width="258.0" height="13.0" fill="#f5f5f5" /><rect x="26.0" y="41.0" width="228.0" height="12.0" fill="#edf5fa" /><rect x="30.0" y="44.0" width="210.0" height="1.3" fill="#a5a5a5" /><rect x="35.0" y="48.0" width="25.0" height="1.3" fill="#a5a5a5" /><rect x="50.0" y="48.0" width="12.0" height="1.3" fill="#7db0e8" /><rect x="238.0" y="31.5" width="15.0" height="6.0" fill="#36b596" /><rect x="27.0" y="34.0" width="10.0" height="1.6" fill="#555" /><rect x="45.0" y="34.0" width="7.0" height="1.6" fill="#555" /><rect x="61.0" y="34.0" width="20.0" height="1.6" fill="#555" /><rect x="45.0" y="34.0" width="7.0" height="1.6" fill="#72c8c0" /><rect x="27.0" y="60.0" width="220.0" height="1.0" fill="#f0f0f0" /><rect x="27.0" y="64.0" width="226.0" height="0.8" fill="#eaeaea" /><rect x="27.0" y="59.5" width="14.0" height="1.2" fill="#aaa" /><rect x="88.0" y="59.5" width="12.0" height="1.2" fill="#aaa" /><rect x="150.0" y="59.5" width="25.0" height="1.2" fill="#aaa" /><rect x="27.0" y="68.8" width="4.0" height="1.7" fill="#92c0f2" /><rect x="88.0" y="68.8" width="18.0" height="1.7" fill="#a2a2a2" /><rect x="150.0" y="68.8" width="31.0" height="1.7" fill="#a5a5a5" /><rect x="186.0" y="68.8" width="4.0" height="1.7" fill="#a2a2a2" /><rect x="27.0" y="73.3" width="226.0" height="0.6" fill="#efefef" /><rect x="27.0" y="78.0" width="9.0" height="1.7" fill="#92c0f2" /><rect x="88.0" y="78.0" width="18.0" height="1.7" fill="#a2a2a2" /><rect x="150.0" y="78.0" width="31.0" height="1.7" fill="#a5a5a5" /><rect x="186.0" y="78.0" width="4.0" height="1.7" fill="#a2a2a2" /><rect x="27.0" y="82.5" width="226.0" height="0.6" fill="#efefef" /><rect x="27.0" y="87.1" width="9.0" height="1.7" fill="#92c0f2" /><rect x="88.0" y="87.1" width="18.0" height="1.7" fill="#a2a2a2" /><rect x="150.0" y="87.1" width="31.0" height="1.7" fill="#a5a5a5" /><rect x="186.0" y="87.1" width="4.0" height="1.7" fill="#a2a2a2" /><rect x="27.0" y="91.6" width="226.0" height="0.6" fill="#efefef" /><rect x="27.0" y="96.2" width="7.0" height="1.7" fill="#92c0f2" /><rect x="88.0" y="96.2" width="18.0" height="1.7" fill="#a2a2a2" /><rect x="150.0" y="96.2" width="31.0" height="1.7" fill="#a5a5a5" /><rect x="186.0" y="96.2" width="4.0" height="1.7" fill="#a2a2a2" /><rect x="27.0" y="100.8" width="226.0" height="0.6" fill="#efefef" /><rect x="27.0" y="105.4" width="6.0" height="1.7" fill="#92c0f2" /><rect x="88.0" y="105.4" width="18.0" height="1.7" fill="#a2a2a2" /><rect x="150.0" y="105.4" width="31.0" height="1.7" fill="#a5a5a5" /><rect x="186.0" y="105.4" width="4.0" height="1.7" fill="#a2a2a2" /><rect x="27.0" y="109.9" width="226.0" height="0.6" fill="#efefef" /><rect x="27.0" y="114.5" width="9.0" height="1.7" fill="#92c0f2" /><rect x="88.0" y="114.5" width="18.0" height="1.7" fill="#a2a2a2" /><rect x="150.0" y="114.5" width="31.0" height="1.7" fill="#a5a5a5" /><rect x="186.0" y="114.5" width="4.0" height="1.7" fill="#a2a2a2" /><rect x="27.0" y="119.0" width="226.0" height="0.6" fill="#efefef" /><rect x="27.0" y="123.7" width="5.0" height="1.7" fill="#92c0f2" /><rect x="88.0" y="123.7" width="18.0" height="1.7" fill="#a2a2a2" /><rect x="150.0" y="123.7" width="31.0" height="1.7" fill="#a5a5a5" /><rect x="186.0" y="123.7" width="4.0" height="1.7" fill="#a2a2a2" /><rect x="27.0" y="128.2" width="226.0" height="0.6" fill="#efefef" /><rect x="27.0" y="132.8" width="20.0" height="1.7" fill="#92c0f2" /><rect x="88.0" y="132.8" width="18.0" height="1.7" fill="#a2a2a2" /><rect x="150.0" y="132.8" width="31.0" height="1.7" fill="#a5a5a5" /><rect x="27.0" y="137.3" width="226.0" height="0.6" fill="#efefef" /><rect x="27.0" y="142.0" width="8.0" height="1.7" fill="#92c0f2" /><rect x="88.0" y="142.0" width="18.0" height="1.7" fill="#a2a2a2" /><rect x="150.0" y="142.0" width="31.0" height="1.7" fill="#a5a5a5" /><rect x="186.0" y="142.0" width="4.0" height="1.7" fill="#a2a2a2" /><rect x="27.0" y="146.5" width="226.0" height="0.6" fill="#efefef" /><rect x="27.0" y="151.2" width="5.0" height="1.7" fill="#92c0f2" /><rect x="88.0" y="151.2" width="18.0" height="1.7" fill="#a2a2a2" /><rect x="150.0" y="151.2" width="31.0" height="1.7" fill="#a5a5a5" /><rect x="27.0" y="155.7" width="226.0" height="0.6" fill="#efefef" /><rect x="27.0" y="160.3" width="8.0" height="1.7" fill="#92c0f2" /><rect x="88.0" y="160.3" width="18.0" height="1.7" fill="#a2a2a2" /><rect x="150.0" y="160.3" width="31.0" height="1.7" fill="#a5a5a5" /><rect x="27.0" y="164.8" width="226.0" height="0.6" fill="#efefef" /><rect x="27.0" y="169.4" width="6.0" height="1.7" fill="#92c0f2" /><rect x="88.0" y="169.4" width="18.0" height="1.7" fill="#a2a2a2" /><rect x="150.0" y="169.4" width="31.0" height="1.7" fill="#a5a5a5" /><rect x="27.0" y="173.9" width="226.0" height="0.6" fill="#efefef" /><rect x="27.0" y="178.6" width="5.0" height="1.7" fill="#92c0f2" /><rect x="88.0" y="178.6" width="18.0" height="1.7" fill="#a2a2a2" /><rect x="150.0" y="178.6" width="31.0" height="1.7" fill="#a5a5a5" /><rect x="27.0" y="183.1" width="226.0" height="0.6" fill="#efefef" /><rect x="256.0" y="56.0" width="1.0" height="92.0" fill="#ddd" /></svg></div>
<svg class="a" style="left:1454px;top:440px" width="19" height="18" viewBox="0 0 19 18"><rect width="19" height="18" fill="#c2f1fb"/><path d="M0 18Q9.5 13.5 19 18Z" fill="#1fae2a"/><rect x="0" y="16" width="19" height="2" fill="#1fae2a"/><path d="M9.5 2L12 7H11L13.5 11H12L14.5 14H4.5L7 11H6L8.5 7H7Z" fill="#1d6b2d"/><rect x="9" y="13" width="1.2" height="3.5" fill="#1d6b2d"/></svg>
<div class="cap" style="left:1484px;top:441.5px">Screenshot....31 PM.png</div>
<div class="card" style="left:1718px;top:228px"><svg class="a" style="left:0;top:0;filter:blur(0.60px)" width="258" height="193" viewBox="0 0 258 193"><rect x="0.0" y="0.0" width="258.0" height="193.0" fill="#f7f7f7" /><rect x="0.0" y="18.0" width="258.0" height="9.0" fill="#101010" /><rect x="4.0" y="21.0" width="15.0" height="3.0" fill="#777" /><rect x="25.0" y="21.0" width="6.0" height="3.0" fill="#888" /><rect x="36.0" y="21.0" width="10.0" height="3.0" fill="#888" /><rect x="238.0" y="20.5" width="5.0" height="4.0" fill="#a5a5a5" /><rect x="249.0" y="20.0" width="6.0" height="6.0" fill="#bbb" rx="3"/><rect x="0.0" y="27.0" width="18.0" height="153.0" fill="#f2f2f2" /><rect x="1.0" y="29.0" width="16.0" height="13.0" fill="#e3f1f7" /><rect x="7.5" y="31.5" width="3.0" height="3.0" fill="#777" rx="1"/><rect x="4.5" y="36.0" width="9.0" height="0.8" fill="#bbb" /><rect x="7.5" y="47.5" width="3.0" height="3.0" fill="#777" rx="1"/><rect x="4.5" y="52.0" width="9.0" height="0.8" fill="#bbb" /><rect x="7.5" y="61.0" width="3.0" height="3.0" fill="#777" rx="1"/><rect x="4.5" y="65.5" width="9.0" height="0.8" fill="#bbb" /><rect x="7.5" y="76.0" width="3.0" height="3.0" fill="#777" rx="1"/><rect x="4.5" y="80.5" width="9.0" height="0.8" fill="#bbb" /><rect x="7.5" y="90.5" width="3.0" height="3.0" fill="#777" rx="1"/><rect x="4.5" y="95.0" width="9.0" height="0.8" fill="#bbb" /><rect x="7.5" y="105.5" width="3.0" height="3.0" fill="#777" rx="1"/><rect x="4.5" y="110.0" width="9.0" height="0.8" fill="#bbb" /><rect x="18.0" y="27.0" width="240.0" height="153.0" fill="#fff" /><rect x="0.0" y="180.0" width="258.0" height="13.0" fill="#f5f5f5" /><rect x="26.0" y="41.0" width="228.0" height="12.0" fill="#edf5fa" /><rect x="30.0" y="44.0" width="210.0" height="1.3" fill="#a5a5a5" /><rect x="35.0" y="48.0" width="55.0" height="1.3" fill="#a5a5a5" /><rect x="205.0" y="48.0" width="12.0" height="1.3" fill="#7db0e8" /><rect x="235.0" y="31.5" width="18.0" height="6.0" fill="#36b596" /><rect x="27.0" y="34.0" width="10.0" height="1.6" fill="#555" /><rect x="45.0" y="34.0" width="7.0" height="1.6" fill="#555" /><rect x="61.0" y="34.0" width="20.0" height="1.6" fill="#555" /><rect x="27.0" y="34.0" width="10.0" height="1.6" fill="#72c8c0" /><rect x="27.0" y="60.0" width="220.0" height="1.0" fill="#f0f0f0" /><rect x="27.0" y="64.0" width="226.0" height="0.8" fill="#eaeaea" /><rect x="27.0" y="59.5" width="16.0" height="1.2" fill="#aaa" /><rect x="77.0" y="59.5" width="16.0" height="1.2" fill="#aaa" /><rect x="150.0" y="59.5" width="40.0" height="1.2" fill="#aaa" /><rect x="241.0" y="59.5" width="6.0" height="1.2" fill="#aaa" /><rect x="27.0" y="68.8" width="5.0" height="1.7" fill="#92c0f2" /><rect x="77.0" y="68.8" width="1.0" height="1.7" fill="#a2a2a2" /><rect x="150.0" y="68.8" width="15.0" height="1.7" fill="#a2a2a2" /><rect x="241.0" y="67.8" width="9.0" height="4.0" fill="#2fba48" rx="2"/><rect x="27.0" y="73.3" width="226.0" height="0.6" fill="#efefef" /><rect x="27.0" y="78.0" width="33.0" height="1.7" fill="#92c0f2" /><rect x="77.0" y="78.0" width="53.0" height="1.7" fill="#a2a2a2" /><rect x="150.0" y="78.0" width="15.0" height="1.7" fill="#a2a2a2" /><rect x="241.0" y="77.0" width="9.0" height="4.0" fill="#2fba48" rx="2"/><rect x="27.0" y="82.5" width="226.0" height="0.6" fill="#efefef" /></svg></div>
<svg class="a" style="left:1732px;top:440px" width="19" height="18" viewBox="0 0 19 18"><rect width="19" height="18" fill="#c2f1fb"/><path d="M0 18Q9.5 13.5 19 18Z" fill="#1fae2a"/><rect x="0" y="16" width="19" height="2" fill="#1fae2a"/><path d="M9.5 2L12 7H11L13.5 11H12L14.5 14H4.5L7 11H6L8.5 7H7Z" fill="#1d6b2d"/><rect x="9" y="13" width="1.2" height="3.5" fill="#1d6b2d"/></svg>
<div class="cap" style="left:1762px;top:441.5px">Screenshot....00 PM.png</div>
<div class="card" style="left:606px;top:535px"><svg class="a" style="left:0;top:0;filter:blur(0.35px)" width="258" height="193" viewBox="0 0 258 193"><rect x="72.7" y="0.0" width="114.3" height="193.0" fill="#fff" /><rect x="81.0" y="4.5" width="70.0" height="1.8" fill="#a0a0a0" /><rect x="82.5" y="21.0" width="50.0" height="2.0" fill="#9a9a9a" /><rect x="82.5" y="27.0" width="40.0" height="2.0" fill="#a0a0a0" /><rect x="82.5" y="32.5" width="18.0" height="2.0" fill="#a0a0a0" /><path d="M96.0 120.0 L152.6 20.3 L171.0 20.3" fill="none" stroke="#333" stroke-width="1.40" /><path d="M92.0 119.0 L149.0 19.0" fill="none" stroke="#a0a0a0" stroke-width="0.80" stroke-dasharray="3 4"/><path d="M101.5 152.0 L156.3 49.8 L182.0 49.8" fill="none" stroke="#333" stroke-width="1.30" /><path d="M156.3 50.0 L156.3 152.0" fill="none" stroke="#333" stroke-width="1.10" /><path d="M80.0 152.0 L186.0 152.0" fill="none" stroke="#444" stroke-width="1.20" /><rect x="154.3" y="51.8" width="9.0" height="2.6" fill="#333" /><rect x="149.3" y="61.1" width="9.0" height="2.6" fill="#333" /><rect x="144.3" y="70.4" width="9.0" height="2.6" fill="#333" /><rect x="139.4" y="79.7" width="9.0" height="2.6" fill="#333" /><rect x="134.4" y="89.0" width="9.0" height="2.6" fill="#333" /><rect x="129.4" y="98.3" width="9.0" height="2.6" fill="#333" /><rect x="124.4" y="107.5" width="9.0" height="2.6" fill="#333" /><rect x="119.4" y="116.8" width="9.0" height="2.6" fill="#333" /><rect x="114.4" y="126.1" width="9.0" height="2.6" fill="#333" /><rect x="109.5" y="135.4" width="9.0" height="2.6" fill="#333" /><rect x="104.5" y="144.7" width="9.0" height="2.6" fill="#333" /><rect x="167.0" y="55.0" width="12.0" height="2.0" fill="#9a9a9a" /><rect x="167.0" y="61.0" width="8.0" height="2.0" fill="#9a9a9a" /><rect x="167.0" y="67.0" width="12.0" height="2.0" fill="#9a9a9a" /><rect x="167.0" y="73.0" width="10.0" height="2.0" fill="#9a9a9a" /><rect x="167.0" y="79.0" width="12.0" height="2.0" fill="#9a9a9a" /><rect x="81.0" y="127.0" width="10.0" height="2.0" fill="#9a9a9a" /><rect x="81.0" y="133.0" width="8.0" height="2.0" fill="#9a9a9a" /><rect x="81.0" y="139.0" width="9.0" height="2.0" fill="#9a9a9a" /><rect x="81.0" y="145.0" width="8.0" height="2.0" fill="#9a9a9a" /><rect x="136.0" y="131.0" width="14.0" height="2.0" fill="#a0a0a0" /><rect x="136.0" y="137.0" width="12.0" height="2.0" fill="#a0a0a0" /><rect x="136.0" y="143.0" width="12.0" height="2.0" fill="#a0a0a0" /><path d="M101.0 152.0 L84.0 181.0" fill="none" stroke="#333" stroke-width="1.10" /><rect x="87.0" y="178.0" width="27.0" height="5.0" fill="#fff" stroke="#333" stroke-width="1"/><path d="M87.0 188.0 L113.0 188.0" fill="none" stroke="#333" stroke-width="1.00" /><path d="M79.0 162.0 L79.0 179.0" fill="none" stroke="#333" stroke-width="1.00" /><rect x="80.0" y="166.0" width="5.0" height="6.0" fill="#888" /><rect x="110.0" y="160.0" width="12.0" height="3.0" fill="#444" /><rect x="108.0" y="168.0" width="16.0" height="3.0" fill="#8a8a8a" /><rect x="135.0" y="159.0" width="25.0" height="2.0" fill="#9a9a9a" /><rect x="162.0" y="158.0" width="22.0" height="3.0" fill="#a0a0a0" /><rect x="126.0" y="165.0" width="24.0" height="2.0" fill="#a0a0a0" /><rect x="118.0" y="172.0" width="12.0" height="2.0" fill="#a0a0a0" /><rect x="139.0" y="180.0" width="32.0" height="2.0" fill="#8a8a8a" /><rect x="139.0" y="186.0" width="32.0" height="2.0" fill="#8a8a8a" /></svg></div>
<svg class="a" style="left:620px;top:747px" width="19" height="18" viewBox="0 0 19 18"><rect width="19" height="18" fill="#c2f1fb"/><path d="M0 18Q9.5 13.5 19 18Z" fill="#1fae2a"/><rect x="0" y="16" width="19" height="2" fill="#1fae2a"/><path d="M9.5 2L12 7H11L13.5 11H12L14.5 14H4.5L7 11H6L8.5 7H7Z" fill="#1d6b2d"/><rect x="9" y="13" width="1.2" height="3.5" fill="#1d6b2d"/></svg>
<div class="cap" style="left:650px;top:748.5px">Staircase Layout.jpg</div>
<div class="card" style="left:884px;top:535px"><svg class="a" style="left:0;top:0;filter:blur(0.40px)" width="258" height="193" viewBox="0 0 258 193"><rect x="0.0" y="0.0" width="258.0" height="193.0" fill="#e9e9e9" /><path d="M37.0 0.0 L37.0 90.0" fill="none" stroke="#8a8a8a" stroke-width="0.80" /><path d="M46.0 0.0 L46.0 90.0" fill="none" stroke="#8a8a8a" stroke-width="0.80" /><path d="M64.0 0.0 L64.0 90.0" fill="none" stroke="#8a8a8a" stroke-width="0.80" /><path d="M97.0 0.0 L97.0 90.0" fill="none" stroke="#8a8a8a" stroke-width="0.80" /><path d="M129.0 0.0 L129.0 90.0" fill="none" stroke="#8a8a8a" stroke-width="0.80" /><path d="M189.0 0.0 L189.0 60.0" fill="none" stroke="#8a8a8a" stroke-width="0.80" /><path d="M208.0 0.0 L208.0 60.0" fill="none" stroke="#8a8a8a" stroke-width="0.80" /><path d="M222.0 0.0 L222.0 60.0" fill="none" stroke="#8a8a8a" stroke-width="0.80" /><path d="M230.0 0.0 L230.0 60.0" fill="none" stroke="#8a8a8a" stroke-width="0.80" /><path d="M37.0 20.0 L37.0 175.0" fill="none" stroke="#777" stroke-width="0.80" /><path d="M46.0 20.0 L46.0 175.0" fill="none" stroke="#777" stroke-width="0.80" /><path d="M52.0 95.0 L148.0 95.0" fill="none" stroke="#6a6a6a" stroke-width="1.60" /><path d="M148.0 95.0 L250.0 95.0" fill="none" stroke="#666" stroke-width="1.00" /><rect x="149" y="64" width="98" height="69" fill="none" stroke="#555" stroke-width="1.1"/><rect x="151" y="68" width="94" height="56" fill="none" stroke="#777" stroke-width="0.7"/><path d="M190.0 70.0 L258.0 70.0" fill="none" stroke="#777" stroke-width="0.80" /><path d="M190.0 75.0 L258.0 75.0" fill="none" stroke="#777" stroke-width="0.80" /><path d="M190.0 80.0 L258.0 80.0" fill="none" stroke="#777" stroke-width="0.80" /><path d="M190.0 85.0 L258.0 85.0" fill="none" stroke="#777" stroke-width="0.80" /><path d="M190.0 102.0 L258.0 102.0" fill="none" stroke="#777" stroke-width="0.80" /><path d="M190.0 110.0 L258.0 110.0" fill="none" stroke="#777" stroke-width="0.80" /><path d="M188.0 64.0 L188.0 133.0" fill="none" stroke="#888" stroke-width="0.70" /><path d="M200.0 64.0 L200.0 133.0" fill="none" stroke="#888" stroke-width="0.70" /><path d="M212.0 64.0 L212.0 133.0" fill="none" stroke="#888" stroke-width="0.70" /><path d="M230.0 64.0 L230.0 133.0" fill="none" stroke="#888" stroke-width="0.70" /><path d="M240.0 64.0 L240.0 133.0" fill="none" stroke="#888" stroke-width="0.70" /><rect x="59" y="64" width="49" height="51" fill="none" stroke="#555" stroke-width="0.9"/><rect x="61" y="82" width="45" height="30" fill="none" stroke="#888" stroke-width="0.7"/><path d="M23.0 124.0 L114.0 124.0 L114.0 150.0" fill="none" stroke="#7a7a7a" stroke-width="0.90" /><path d="M23.0 50.0 L23.0 124.0" fill="none" stroke="#666" stroke-width="0.80" /><rect x="31" y="87" width="24" height="22" fill="none" stroke="#444" stroke-width="1"/><circle cx="38" cy="97" r="4" fill="none" stroke="#666" stroke-width="1.1"/><circle cx="47" cy="97" r="4" fill="none" stroke="#666" stroke-width="1.1"/><rect x="2" y="44" width="14" height="18" fill="none" stroke="#555" stroke-width="0.9"/><circle cx="9" cy="53" r="3.5" fill="none" stroke="#666" stroke-width="1"/><rect x="153" y="75" width="26" height="20" fill="none" stroke="#555" stroke-width="0.9"/><rect x="153" y="103" width="26" height="20" fill="none" stroke="#555" stroke-width="0.9"/><circle cx="160" cy="84" r="3.5" fill="none" stroke="#666"/><circle cx="166" cy="84" r="3.5" fill="none" stroke="#666"/><circle cx="160" cy="112" r="3.5" fill="none" stroke="#666"/><circle cx="166" cy="112" r="3.5" fill="none" stroke="#666"/><rect x="197" y="45" width="38" height="20" fill="none" stroke="#666" stroke-width="0.8"/><ellipse cx="217" cy="54" rx="9" ry="3" fill="#777"/><rect x="206.0" y="112.0" width="12.0" height="6.0" fill="#6a6a6a" /><rect x="100.0" y="102.0" width="8.0" height="6.0" fill="#5a5a5a" /><rect x="84.0" y="88.0" width="14.0" height="4.0" fill="#7a7a7a" /><rect x="214" y="92" width="30" height="18" fill="none" stroke="#555" stroke-width="0.9"/><circle cx="222" cy="100" r="5" fill="none" stroke="#666" stroke-width="1.1"/><ellipse cx="134" cy="147" rx="13" ry="8" fill="none" stroke="#444" stroke-width="1"/><path d="M114.0 150.0 L114.0 178.0 L132.0 178.0" fill="none" stroke="#7a7a7a" stroke-width="0.90" /><rect x="116.0" y="172.0" width="18.0" height="4.0" fill="#666" /><rect x="119" y="25" width="16" height="14" fill="none" stroke="#555" stroke-width="0.9"/><rect x="121.0" y="31.0" width="3.0" height="3.0" fill="#6a6a6a" /><rect x="130.0" y="31.0" width="3.0" height="3.0" fill="#6a6a6a" /><rect x="152" y="25" width="16" height="14" fill="none" stroke="#555" stroke-width="0.9"/><rect x="154.0" y="31.0" width="3.0" height="3.0" fill="#6a6a6a" /><rect x="163.0" y="31.0" width="3.0" height="3.0" fill="#6a6a6a" /><circle cx="64" cy="48" r="3.2" fill="none" stroke="#555" stroke-width="0.9"/><circle cx="97" cy="44" r="3.2" fill="none" stroke="#555" stroke-width="0.9"/><circle cx="129" cy="45" r="3.2" fill="none" stroke="#555" stroke-width="0.9"/><circle cx="160" cy="45" r="3.2" fill="none" stroke="#555" stroke-width="0.9"/><circle cx="189" cy="15" r="3.2" fill="none" stroke="#555" stroke-width="0.9"/><circle cx="208" cy="14" r="3.2" fill="none" stroke="#555" stroke-width="0.9"/><circle cx="222" cy="14" r="3.2" fill="none" stroke="#555" stroke-width="0.9"/><circle cx="230" cy="14" r="3.2" fill="none" stroke="#555" stroke-width="0.9"/><circle cx="37" cy="48" r="3.2" fill="none" stroke="#555" stroke-width="0.9"/><circle cx="46" cy="48" r="3.2" fill="none" stroke="#555" stroke-width="0.9"/><circle cx="24" cy="90" r="3.2" fill="none" stroke="#555" stroke-width="0.9"/><circle cx="41" cy="143" r="3.2" fill="none" stroke="#555" stroke-width="0.9"/><circle cx="84" cy="143" r="3.2" fill="none" stroke="#555" stroke-width="0.9"/><circle cx="99" cy="143" r="3.2" fill="none" stroke="#555" stroke-width="0.9"/><circle cx="175" cy="143" r="3.2" fill="none" stroke="#555" stroke-width="0.9"/><circle cx="197" cy="143" r="3.2" fill="none" stroke="#555" stroke-width="0.9"/><circle cx="146" cy="125" r="3.2" fill="none" stroke="#555" stroke-width="0.9"/><circle cx="140" cy="70" r="3.2" fill="none" stroke="#555" stroke-width="0.9"/><rect x="2.0" y="13.0" width="22.0" height="3.0" fill="#7a7a7a" /><rect x="28.0" y="9.0" width="14.0" height="2.0" fill="#777" /><rect x="28.0" y="15.0" width="12.0" height="2.0" fill="#777" /><rect x="22.0" y="23.0" width="12.0" height="4.0" fill="#999" /><rect x="2.0" y="34.0" width="14.0" height="2.0" fill="#666" /><rect x="2.0" y="60.0" width="6.0" height="3.0" fill="#888" /><rect x="2.0" y="158.0" width="5.0" height="30.0" fill="#666" stroke-dasharray="2 1"/><rect x="10.0" y="162.0" width="12.0" height="2.0" fill="#777" /><rect x="10.0" y="167.0" width="10.0" height="2.0" fill="#888" /><rect x="216.0" y="167.0" width="22.0" height="4.0" fill="#7a7a7a" /><rect x="243.0" y="160.0" width="12.0" height="20.0" fill="#888" fill-opacity="0.4"/><path d="M12.0 140.0 L12.0 193.0" fill="none" stroke="#999" stroke-width="0.60" /><path d="M97.0 140.0 L97.0 193.0" fill="none" stroke="#999" stroke-width="0.60" /><path d="M114.0 140.0 L114.0 193.0" fill="none" stroke="#999" stroke-width="0.60" /><path d="M194.0 140.0 L194.0 193.0" fill="none" stroke="#999" stroke-width="0.60" /><path d="M197.0 160.0 L258.0 160.0" fill="none" stroke="#888" stroke-width="0.60" /><path d="M0.0 183.0 L114.0 183.0" fill="none" stroke="#aaa" stroke-width="0.60" /></svg></div>
<svg class="a" style="left:898px;top:747px" width="19" height="18" viewBox="0 0 19 18"><rect width="19" height="18" fill="#c2f1fb"/><path d="M0 18Q9.5 13.5 19 18Z" fill="#1fae2a"/><rect x="0" y="16" width="19" height="2" fill="#1fae2a"/><path d="M9.5 2L12 7H11L13.5 11H12L14.5 14H4.5L7 11H6L8.5 7H7Z" fill="#1d6b2d"/><rect x="9" y="13" width="1.2" height="3.5" fill="#1d6b2d"/></svg>
<div class="cap" style="left:928px;top:748.5px">Power Lines.jpeg</div>
<div class="card" style="left:1162px;top:535px"><svg class="a" style="left:0;top:0;filter:blur(0.30px)" width="258" height="193" viewBox="0 0 258 193"><rect x="32.7" y="0.0" width="192.3" height="193.0" fill="#fff" /><rect x="33.2" y="1.5" width="191.4" height="191.2" fill="none" stroke="#b04848" stroke-width="1.1"/><path d="M53.8 149.0 L128.6 136.6 L201.0 151.6 L128.6 162.8Z" fill="#a84f6c" /><path d="M60.0 150.0 L135.0 137.5" fill="none" stroke="#c47d94" stroke-width="0.90" /><path d="M62.0 152.0 L146.0 140.1" fill="none" stroke="#c47d94" stroke-width="0.90" /><path d="M64.0 154.0 L157.0 142.7" fill="none" stroke="#c47d94" stroke-width="0.90" /><path d="M66.0 156.0 L168.0 145.3" fill="none" stroke="#c47d94" stroke-width="0.90" /><path d="M68.0 158.0 L179.0 147.9" fill="none" stroke="#c47d94" stroke-width="0.90" /><path d="M70.0 160.0 L190.0 150.5" fill="none" stroke="#c47d94" stroke-width="0.90" /><path d="M46.0 146.0 L128.6 133.0 L212.0 142.0 L208.0 147.0 L128.6 139.0 L50.0 151.0Z" fill="#e6cc96" /><rect x="56.0" y="147.0" width="5.0" height="3.5" fill="#f4e8ec" /><rect x="64.5" y="145.6" width="5.0" height="3.5" fill="#f4e8ec" /><rect x="73.0" y="144.2" width="5.0" height="3.5" fill="#f4e8ec" /><rect x="81.5" y="142.8" width="5.0" height="3.5" fill="#f4e8ec" /><rect x="90.0" y="141.4" width="5.0" height="3.5" fill="#f4e8ec" /><rect x="98.5" y="140.0" width="5.0" height="3.5" fill="#f4e8ec" /><rect x="107.0" y="138.6" width="5.0" height="3.5" fill="#f4e8ec" /><rect x="115.5" y="137.2" width="5.0" height="3.5" fill="#f4e8ec" /><rect x="124.0" y="135.8" width="5.0" height="3.5" fill="#f4e8ec" /><path d="M118.7 91.7 L173.5 56.8 L215.0 128.0 L136.0 127.0Z" fill="#c39658" /><path d="M173.5 56.8 L213.4 100.5 L215.0 130.0 L190.0 120.0Z" fill="#a87a44" /><path d="M44.0 126.0 L119.0 113.0 L121.0 121.0 L46.0 133.0Z" fill="#c89c5e" /><path d="M42.0 135.0 L75.0 129.0 L75.0 133.0 L43.0 139.0Z" fill="#8a8a8a" /><path d="M128.6 131.6 L177.3 78.0 L215.9 146.6" fill="none" stroke="#e3c183" stroke-width="3.20" /><path d="M46.0 148.0 L215.9 146.6" fill="none" stroke="#e3c183" stroke-width="2.60" /><path d="M60.0 146.0 L177.3 78.0" fill="none" stroke="#e3c183" stroke-width="2.20" /><path d="M140.0 132.0 L136.0 119.0" fill="none" stroke="#e8cc95" stroke-width="1.80" /><path d="M151.0 134.5 L147.0 106.9" fill="none" stroke="#e8cc95" stroke-width="1.80" /><path d="M162.0 137.0 L158.0 94.8" fill="none" stroke="#e8cc95" stroke-width="1.80" /><path d="M173.0 139.5 L169.0 82.7" fill="none" stroke="#e8cc95" stroke-width="1.80" /><path d="M184.0 142.0 L180.0 89.9" fill="none" stroke="#e8cc95" stroke-width="1.80" /><path d="M195.0 144.5 L191.0 109.5" fill="none" stroke="#e8cc95" stroke-width="1.80" /><path d="M70.0 143.0 L95.0 118.0" fill="none" stroke="#dab777" stroke-width="1.60" /><path d="M82.0 141.0 L107.0 112.0" fill="none" stroke="#dab777" stroke-width="1.60" /><path d="M94.0 139.0 L119.0 106.0" fill="none" stroke="#dab777" stroke-width="1.60" /><path d="M106.0 137.0 L131.0 100.0" fill="none" stroke="#dab777" stroke-width="1.60" /><path d="M118.0 135.0 L143.0 94.0" fill="none" stroke="#dab777" stroke-width="1.60" /><path d="M171.0 31.9 L213.4 100.5 L206.0 103.0 L162.3 50.6Z" fill="#161616" /><path d="M43.9 101.7 L95.0 53.0 L171.0 31.9 L162.3 50.6 L118.7 91.7Z" fill="#4d4d4d" /><path d="M60.0 90.0 L100.0 60.0 L150.0 45.0 L120.0 80.0Z" fill="#5a5a5a" fill-opacity="0.6"/><path d="M48.9 104.2 L123.7 89.2 L123.7 95.5 L50.1 110.4Z" fill="#c4c4c4" /><path d="M41.4 111.7 L123.7 95.5 L123.7 106.7 L42.6 121.7Z" fill="#3e3e3e" /><path d="M41.0 122.0 L100.0 110.0 L100.0 114.0 L42.0 125.0Z" fill="#555" /><path d="M95.0 44.4 L171.0 20.7" fill="none" stroke="#1a1a1a" stroke-width="2.80" /><path d="M95.0 48.5 L171.0 27.3" fill="none" stroke="#1a1a1a" stroke-width="2.20" /><circle cx="133.5" cy="48" r="3.6" fill="#252525"/><path d="M109.7 15.7 L127.4 30.7" fill="none" stroke="#111" stroke-width="0.90" /><path d="M67.6 30.7 L95.0 48.0" fill="none" stroke="#111" stroke-width="0.90" /><path d="M64.0 55.6 L100.0 71.8" fill="none" stroke="#111" stroke-width="0.90" /><path d="M189.5 53.0 L172.0 57.0" fill="none" stroke="#111" stroke-width="0.90" /><path d="M198.5 64.3 L153.6 71.8" fill="none" stroke="#111" stroke-width="0.90" /><path d="M186.0 160.3 L112.4 108.0" fill="none" stroke="#111" stroke-width="0.90" /><path d="M162.3 172.8 L88.8 116.7" fill="none" stroke="#111" stroke-width="0.90" /><path d="M83.8 174.0 L69.0 114.0" fill="none" stroke="#111" stroke-width="0.90" /><rect x="95.0" y="13.5" width="27.0" height="1.3" fill="#444" /><rect x="55.0" y="27.5" width="14.0" height="1.3" fill="#444" /><rect x="47.0" y="47.0" width="34.0" height="1.3" fill="#444" /><rect x="48.0" y="50.5" width="28.0" height="1.3" fill="#444" /><rect x="196.0" y="50.5" width="18.0" height="1.3" fill="#444" /><rect x="198.0" y="61.0" width="10.0" height="1.3" fill="#444" /><rect x="198.0" y="64.5" width="26.0" height="1.3" fill="#444" /><rect x="189.0" y="161.5" width="34.0" height="1.3" fill="#444" /><rect x="149.0" y="175.0" width="26.0" height="1.3" fill="#444" /><rect x="72.0" y="175.0" width="22.0" height="1.3" fill="#444" /></svg></div>
<svg class="a" style="left:1176px;top:747px" width="19" height="18" viewBox="0 0 19 18"><rect width="19" height="18" fill="#c2f1fb"/><path d="M0 18Q9.5 13.5 19 18Z" fill="#1fae2a"/><rect x="0" y="16" width="19" height="2" fill="#1fae2a"/><path d="M9.5 2L12 7H11L13.5 11H12L14.5 14H4.5L7 11H6L8.5 7H7Z" fill="#1d6b2d"/><rect x="9" y="13" width="1.2" height="3.5" fill="#1d6b2d"/></svg>
<div class="cap" style="left:1206px;top:748.5px">Roof Diagram.jpg</div>
<div class="card" style="left:1440px;top:535px"><svg class="a" style="left:0;top:0;filter:blur(0.35px)" width="258" height="193" viewBox="0 0 258 193"><defs><clipPath id="cbm"><rect x="53.8" y="0.7" width="150.9" height="192.3"/></clipPath></defs><g clip-path="url(#cbm)"><rect x="53.8" y="0.0" width="151.0" height="193.0" fill="#6a4a2a" /><rect x="53.8" y="0.0" width="151.0" height="13.2" fill="#dfe3e6" /><path d="M52.0 0.0 L56.0 14.0" fill="none" stroke="#1c1c1c" stroke-width="1.80" /><path d="M71.2 0.0 L67.2 14.0" fill="none" stroke="#1c1c1c" stroke-width="1.80" /><path d="M74.4 0.0 L78.4 14.0" fill="none" stroke="#1c1c1c" stroke-width="1.80" /><path d="M93.6 0.0 L89.6 14.0" fill="none" stroke="#1c1c1c" stroke-width="1.80" /><path d="M96.8 0.0 L100.8 14.0" fill="none" stroke="#1c1c1c" stroke-width="1.80" /><path d="M116.0 0.0 L112.0 14.0" fill="none" stroke="#1c1c1c" stroke-width="1.80" /><path d="M119.2 0.0 L123.2 14.0" fill="none" stroke="#1c1c1c" stroke-width="1.80" /><path d="M138.4 0.0 L134.4 14.0" fill="none" stroke="#1c1c1c" stroke-width="1.80" /><path d="M141.6 0.0 L145.6 14.0" fill="none" stroke="#1c1c1c" stroke-width="1.80" /><path d="M160.8 0.0 L156.8 14.0" fill="none" stroke="#1c1c1c" stroke-width="1.80" /><path d="M164.0 0.0 L168.0 14.0" fill="none" stroke="#1c1c1c" stroke-width="1.80" /><path d="M183.2 0.0 L179.2 14.0" fill="none" stroke="#1c1c1c" stroke-width="1.80" /><path d="M186.4 0.0 L190.4 14.0" fill="none" stroke="#1c1c1c" stroke-width="1.80" /><path d="M205.6 0.0 L201.6 14.0" fill="none" stroke="#1c1c1c" stroke-width="1.80" /><rect x="53.8" y="13.2" width="151.0" height="37.5" fill="#5a3c22" /><rect x="53.8" y="16.5" width="151.0" height="2.6" fill="#c9a06a" /><rect x="53.8" y="48.2" width="151.0" height="2.6" fill="#c29a62" /><path d="M55.8 19.0 L62.8 48.0 L68.8 19.0 L75.8 48.0 L81.8 19.0" fill="none" stroke="#d0a66c" stroke-width="1.80" /><path d="M57.8 24.0 L68.8 20.0 L79.8 24.0" fill="none" stroke="#d0a66c" stroke-width="1.20" /><path d="M86.0 19.0 L93.0 48.0 L99.0 19.0 L106.0 48.0 L112.0 19.0" fill="none" stroke="#d0a66c" stroke-width="1.80" /><path d="M88.0 24.0 L99.0 20.0 L110.0 24.0" fill="none" stroke="#d0a66c" stroke-width="1.20" /><path d="M116.2 19.0 L123.2 48.0 L129.2 19.0 L136.2 48.0 L142.2 19.0" fill="none" stroke="#d0a66c" stroke-width="1.80" /><path d="M118.2 24.0 L129.2 20.0 L140.2 24.0" fill="none" stroke="#d0a66c" stroke-width="1.20" /><path d="M146.4 19.0 L153.4 48.0 L159.4 19.0 L166.4 48.0 L172.4 19.0" fill="none" stroke="#d0a66c" stroke-width="1.80" /><path d="M148.4 24.0 L159.4 20.0 L170.4 24.0" fill="none" stroke="#d0a66c" stroke-width="1.20" /><path d="M176.6 19.0 L183.6 48.0 L189.6 19.0 L196.6 48.0 L202.6 19.0" fill="none" stroke="#d0a66c" stroke-width="1.80" /><path d="M178.6 24.0 L189.6 20.0 L200.6 24.0" fill="none" stroke="#d0a66c" stroke-width="1.20" /><rect x="53.8" y="50.7" width="151.0" height="68.0" fill="#553a22" /><rect x="53.8" y="119.0" width="151.0" height="41.0" fill="#7c5a34" /><rect x="53.8" y="54.0" width="151.0" height="1.4" fill="#8d6a40" fill-opacity="0.8"/><rect x="53.8" y="63.0" width="151.0" height="1.4" fill="#8d6a40" fill-opacity="0.8"/><rect x="53.8" y="72.0" width="151.0" height="1.4" fill="#8d6a40" fill-opacity="0.8"/><rect x="53.8" y="81.0" width="151.0" height="1.4" fill="#8d6a40" fill-opacity="0.8"/><rect x="53.8" y="90.0" width="151.0" height="1.4" fill="#8d6a40" fill-opacity="0.8"/><rect x="53.8" y="99.0" width="151.0" height="1.4" fill="#8d6a40" fill-opacity="0.8"/><rect x="53.8" y="108.0" width="151.0" height="1.4" fill="#8d6a40" fill-opacity="0.8"/><rect x="53.8" y="117.0" width="151.0" height="1.4" fill="#8d6a40" fill-opacity="0.8"/><rect x="53.8" y="126.0" width="151.0" height="1.4" fill="#8d6a40" fill-opacity="0.8"/><rect x="53.8" y="135.0" width="151.0" height="1.4" fill="#8d6a40" fill-opacity="0.8"/><rect x="53.8" y="144.0" width="151.0" height="1.4" fill="#8d6a40" fill-opacity="0.8"/><rect x="53.8" y="153.0" width="151.0" height="1.4" fill="#8d6a40" fill-opacity="0.8"/><path d="M94.9 14Q56.8 95 53.0 162" fill="none" stroke="#a87b45" stroke-width="2.0"/><path d="M101.1 14Q69.9 95 66.8 162" fill="none" stroke="#a87b45" stroke-width="2.0"/><path d="M107.3 14Q83.0 95 80.6 162" fill="none" stroke="#a87b45" stroke-width="2.0"/><path d="M113.5 14Q96.1 95 94.4 162" fill="none" stroke="#a87b45" stroke-width="2.0"/><path d="M119.8 14Q109.2 95 108.2 162" fill="none" stroke="#a87b45" stroke-width="2.0"/><path d="M126.0 14Q122.4 95 122.0 162" fill="none" stroke="#a87b45" stroke-width="2.0"/><path d="M132.2 14Q135.5 95 135.8 162" fill="none" stroke="#a87b45" stroke-width="2.0"/><path d="M138.4 14Q148.6 95 149.6 162" fill="none" stroke="#a87b45" stroke-width="2.0"/><path d="M144.6 14Q161.7 95 163.4 162" fill="none" stroke="#a87b45" stroke-width="2.0"/><path d="M150.8 14Q174.8 95 177.2 162" fill="none" stroke="#a87b45" stroke-width="2.0"/><path d="M157.0 14Q187.9 95 191.0 162" fill="none" stroke="#a87b45" stroke-width="2.0"/><path d="M163.2 14Q201.0 95 204.8 162" fill="none" stroke="#a87b45" stroke-width="2.0"/><ellipse cx="74" cy="102" rx="4.5" ry="2.4" fill="#d8d8d4"/><ellipse cx="150" cy="102" rx="4.5" ry="2.4" fill="#d8d8d4"/><rect x="53.8" y="160.0" width="151.0" height="13.0" fill="#e6e8e2" /><rect x="53.8" y="160.0" width="1.6" height="13.0" fill="#b09a7a" /><rect x="67.6" y="160.0" width="1.6" height="13.0" fill="#b09a7a" /><rect x="81.4" y="160.0" width="1.6" height="13.0" fill="#b09a7a" /><rect x="95.2" y="160.0" width="1.6" height="13.0" fill="#b09a7a" /><rect x="109.0" y="160.0" width="1.6" height="13.0" fill="#b09a7a" /><rect x="122.8" y="160.0" width="1.6" height="13.0" fill="#b09a7a" /><rect x="136.6" y="160.0" width="1.6" height="13.0" fill="#b09a7a" /><rect x="150.4" y="160.0" width="1.6" height="13.0" fill="#b09a7a" /><rect x="164.2" y="160.0" width="1.6" height="13.0" fill="#b09a7a" /><rect x="178.0" y="160.0" width="1.6" height="13.0" fill="#b09a7a" /><rect x="191.8" y="160.0" width="1.6" height="13.0" fill="#b09a7a" /><rect x="205.6" y="160.0" width="1.6" height="13.0" fill="#b09a7a" /><rect x="53.8" y="173.0" width="151.0" height="15.0" fill="#eceeee" /><rect x="83.5" y="173.0" width="121.2" height="15.0" fill="#c9cbcb" /><rect x="53.8" y="188.0" width="151.0" height="5.0" fill="#e4e4e4" /></g></svg></div>
<svg class="a" style="left:1454px;top:747px" width="19" height="18" viewBox="0 0 19 18"><rect width="19" height="18" fill="#c2f1fb"/><path d="M0 18Q9.5 13.5 19 18Z" fill="#1fae2a"/><rect x="0" y="16" width="19" height="2" fill="#1fae2a"/><path d="M9.5 2L12 7H11L13.5 11H12L14.5 14H4.5L7 11H6L8.5 7H7Z" fill="#1d6b2d"/><rect x="9" y="13" width="1.2" height="3.5" fill="#1d6b2d"/></svg>
<div class="cap" style="left:1484px;top:748.5px">Roof Beams</div>
<div class="card" style="left:1718px;top:535px"><svg class="a" style="left:0;top:0;filter:blur(0.30px)" width="258" height="193" viewBox="0 0 258 193"><rect x="20.0" y="0.0" width="216.0" height="193.0" fill="#fff" /><text x="23.8" y="10.5" font-family="Liberation Sans" fill="#333" font-size="7.3" font-weight="700">Task Id</text><text x="129.5" y="10.5" font-family="Liberation Sans" fill="#333" font-size="7.3" font-weight="700">Task</text><text x="23.8" y="22.3" font-family="Liberation Sans" fill="#333" font-size="7.3">JC1-T1</text><text x="129.5" y="22.3" font-family="Liberation Sans" fill="#333" font-size="7.3">ranjith@themathcompany.com</text><text x="23.8" y="33.9" font-family="Liberation Sans" fill="#333" font-size="7.3">JC1-T2</text><text x="129.5" y="33.9" font-family="Liberation Sans" fill="#333" font-size="7.3">utstdl@kunnskapstrening.no</text><text x="23.8" y="45.4" font-family="Liberation Sans" fill="#333" font-size="7.3">JC1-T3</text><text x="129.5" y="45.4" font-family="Liberation Sans" fill="#333" font-size="7.3">jfgrimard@hotmail.com</text><text x="23.8" y="57.0" font-family="Liberation Sans" fill="#333" font-size="7.3">JC1-T4</text><text x="129.5" y="57.0" font-family="Liberation Sans" fill="#333" font-size="7.3">w.uhuanan@mozat.com</text><text x="23.8" y="68.5" font-family="Liberation Sans" fill="#333" font-size="7.3">JC1-T5</text><text x="129.5" y="68.5" font-family="Liberation Sans" fill="#333" font-size="7.3">omar@concept-adv.co</text><text x="23.8" y="80.0" font-family="Liberation Sans" fill="#333" font-size="7.3">JC1-T6</text><text x="129.5" y="80.0" font-family="Liberation Sans" fill="#333" font-size="7.3">info@io-global.com</text><text x="23.8" y="91.6" font-family="Liberation Sans" fill="#333" font-size="7.3">JC1-T7</text><text x="129.5" y="91.6" font-family="Liberation Sans" fill="#333" font-size="7.3">christian.blankenhorn@evoleo.</text><text x="23.8" y="103.2" font-family="Liberation Sans" fill="#333" font-size="7.3">JC1-T8</text><text x="129.5" y="103.2" font-family="Liberation Sans" fill="#333" font-size="7.3">vadivelan@leaap.com</text><text x="23.8" y="114.7" font-family="Liberation Sans" fill="#333" font-size="7.3">JC1-T9</text><text x="129.5" y="114.7" font-family="Liberation Sans" fill="#333" font-size="7.3">li@suppex.com</text><text x="23.8" y="126.2" font-family="Liberation Sans" fill="#333" font-size="7.3">JC1-T10</text><text x="129.5" y="126.2" font-family="Liberation Sans" fill="#333" font-size="7.3">sonja.farling@ramson.fi</text><text x="23.8" y="137.8" font-family="Liberation Sans" fill="#333" font-size="7.3">JC1-T11</text><text x="129.5" y="137.8" font-family="Liberation Sans" fill="#333" font-size="7.3">djodjo02130@gmail.com</text><text x="23.8" y="149.4" font-family="Liberation Sans" fill="#333" font-size="7.3">JC1-T12</text><text x="129.5" y="149.4" font-family="Liberation Sans" fill="#333" font-size="7.3">eugene.ching@qavar.com</text><text x="23.8" y="160.9" font-family="Liberation Sans" fill="#333" font-size="7.3">JC1-T13</text><text x="129.5" y="160.9" font-family="Liberation Sans" fill="#333" font-size="7.3">tony1@triple888.com.au</text><text x="23.8" y="172.5" font-family="Liberation Sans" fill="#333" font-size="7.3">JC1-T14</text><text x="129.5" y="172.5" font-family="Liberation Sans" fill="#333" font-size="7.3">junhai@koreconx.com</text><text x="23.8" y="184.0" font-family="Liberation Sans" fill="#333" font-size="7.3">JC1-T15</text><text x="129.5" y="184.0" font-family="Liberation Sans" fill="#333" font-size="7.3">daniel@tellspec.com</text><text x="23.8" y="195.6" font-family="Liberation Sans" fill="#333" font-size="7.3">JC1-T16</text><text x="129.5" y="195.6" font-family="Liberation Sans" fill="#333" font-size="7.3">tom.obrien@greatplace.com</text></svg></div>
<svg class="a" style="left:1732px;top:747px" width="21" height="22" viewBox="0 0 21 22"><path d="M4.5 0.5H14.5L19.5 5.5V20.5H4.5Z" fill="#fff" stroke="#8a8a8a"/><path d="M14.5 0.5V5.5H19.5" fill="#eee" stroke="#8a8a8a"/><g fill="#9ad5c0"><rect x="11" y="9" width="3" height="1.5"/><rect x="15" y="9" width="3" height="1.5"/><rect x="11" y="12" width="3" height="1.5"/><rect x="15" y="12" width="3" height="1.5"/><rect x="11" y="15" width="3" height="1.5"/><rect x="15" y="15" width="3" height="1.5"/></g><rect x="0" y="3.8" width="9" height="14" fill="#1f7a3e"/><path d="M2.3 7.5L6.7 14.2M6.7 7.5L2.3 14.2" stroke="#fff" stroke-width="1.6"/></svg>
<div class="cap" style="left:1762px;top:748.5px">task_export.xls</div>

</body></html>
